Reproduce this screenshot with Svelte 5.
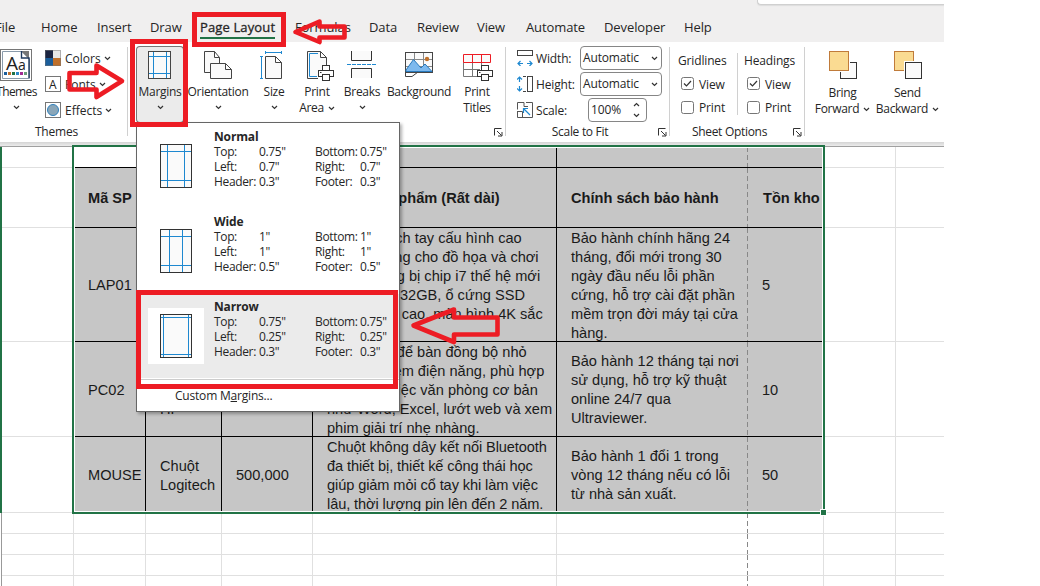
<script lang="ts">
  interface Tab {
    label: string;
    active?: boolean;
  }

  interface MarginPreset {
    name: string;
    rows: [string, string, string, string][];
    guides: string;
    selected?: boolean;
  }

  interface Cell {
    lines: string[];
    cls?: string;
  }

  const TABS: Tab[] = [
    { label: 'File' },
    { label: 'Home' },
    { label: 'Insert' },
    { label: 'Draw' },
    { label: 'Page Layout', active: true },
    { label: 'Formulas' },
    { label: 'Data' },
    { label: 'Review' },
    { label: 'View' },
    { label: 'Automate' },
    { label: 'Developer' },
    { label: 'Help' },
  ];

  const PRESETS: MarginPreset[] = [
    {
      name: 'Normal',
      rows: [
        ['Top:', '0.75"', 'Bottom:', '0.75"'],
        ['Left:', '0.7"', 'Right:', '0.7"'],
        ['Header:', '0.3"', 'Footer:', '0.3"'],
      ],
      guides: 'M7.5 1V43M24.5 1V43M1 7.5H31M1 36.5H31',
    },
    {
      name: 'Wide',
      rows: [
        ['Top:', '1"', 'Bottom:', '1"'],
        ['Left:', '1"', 'Right:', '1"'],
        ['Header:', '0.5"', 'Footer:', '0.5"'],
      ],
      guides: 'M9.5 1V43M22.5 1V43M1 7.5H31M1 36.5H31',
    },
    {
      name: 'Narrow',
      rows: [
        ['Top:', '0.75"', 'Bottom:', '0.75"'],
        ['Left:', '0.25"', 'Right:', '0.25"'],
        ['Header:', '0.3"', 'Footer:', '0.3"'],
      ],
      guides: 'M3.5 1V43M28.5 1V43M1 3.5H31M1 40.5H31',
      selected: true,
    },
  ];

  const OPTIONS = ['Gridlines', 'Headings'];

  const blank = (): Cell => ({ lines: [] });

  const ROWS: Cell[][] = [
    [blank(), blank(), blank(), blank(), blank(), blank()],
    [
      { lines: ['Mã SP'] },
      { lines: ['Tên'] },
      { lines: ['Giá'] },
      { lines: ['Mô tả sản phẩm (Rất dài)'] },
      { lines: ['Chính sách bảo hành'] },
      { lines: ['Tồn kho'], cls: 'wide-head' },
    ],
    [
      { lines: ['LAP01'] },
      { lines: ['Laptop', 'Dell'] },
      { lines: [] },
      {
        lines: [
          'Laptop, xách tay cấu hình cao',
          'chuyên dùng cho đồ họa và chơi',
          'game, trang bị chip i7 thế hệ mới',
          'nhất, RAM 32GB, ổ cứng SSD',
          '1TB tốc độ cao, màn hình 4K sắc',
          'nét.',
        ],
      },
      {
        lines: [
          'Bảo hành chính hãng 24',
          'tháng, đổi mới trong 30',
          'ngày đầu nếu lỗi phần',
          'cứng, hỗ trợ cài đặt phần',
          'mềm trọn đời máy tại cửa',
          'hàng.',
        ],
      },
      { lines: ['5'] },
    ],
    [
      { lines: ['PC02'] },
      { lines: ['Máy', 'tính', 'HP'] },
      { lines: [] },
      {
        lines: [
          'Phiên bản để bàn đồng bộ nhỏ',
          'gọn, tiết kiệm điện năng, phù hợp',
          'cho công việc văn phòng cơ bản',
          'như Word, Excel, lướt web và xem',
          'phim giải trí nhẹ nhàng.',
        ],
      },
      {
        lines: [
          'Bảo hành 12 tháng tại nơi',
          'sử dụng, hỗ trợ kỹ thuật',
          'online 24/7 qua',
          'Ultraviewer.',
        ],
      },
      { lines: ['10'] },
    ],
    [
      { lines: ['MOUSE'] },
      { lines: ['Chuột', 'Logitech'] },
      { lines: ['500,000'] },
      {
        lines: [
          'Chuột không dây kết nối Bluetooth',
          'đa thiết bị, thiết kế công thái học',
          'giúp giảm mỏi cổ tay khi làm việc',
          'lâu, thời lượng pin lên đến 2 năm.',
        ],
        cls: 'tight',
      },
      {
        lines: [
          'Bảo hành 1 đổi 1 trong',
          'vòng 12 tháng nếu có lỗi',
          'từ nhà sản xuất.',
        ],
      },
      { lines: ['50'] },
    ],
  ];

  const EMPTY_ROWS = [0, 1, 2, 3];
  const COLUMNS = [0, 1, 2, 3, 4, 5];
</script>

{#snippet chevron()}
  <svg class="chevron" width="7" height="5" viewBox="0 0 7 5">
    <path d="M1 1L3.5 3.5L6 1" fill="none" stroke="#333" stroke-width="1.2" />
  </svg>
{/snippet}

{#snippet launcher()}
  <svg class="launcher" width="9" height="9" viewBox="0 0 9 9">
    <path d="M.5 7.5V.5H7.5M3 3L7.5 7.5M8 4V8H4" fill="none" stroke="#333" />
  </svg>
{/snippet}

{#snippet printer(x: number, y: number)}
  <g transform="translate({x} {y})" fill="#fff" stroke="#333">
    <path d="M3 4.5H13V11H3Z" stroke="none" />
    <rect x="4.5" y=".5" width="7" height="5" />
    <rect x=".5" y="5.5" width="15" height="6" />
    <path d="M2 7.5H3.5" />
    <rect x="4.5" y="9.5" width="7" height="6" />
  </g>
{/snippet}

<div class="window">
  <header class="tab-bar">
    <div class="search-box"></div>
    <nav class="tabs">
      {#each TABS as tab (tab.label)}
        <span class="tab" class:active={tab.active}>{tab.label}</span>
      {/each}
    </nav>
  </header>

  <div class="ribbon">
    <section class="group themes">
      <div class="group-body">
        <div class="theme-btn">
          <svg width="32" height="32" viewBox="0 0 32 32">
            <rect x=".5" y=".5" width="31" height="31" fill="#fff" stroke="#767676" />
            <path d="M2.5 2.5H22L29.5 10V29.5H2.5Z" fill="#fff" stroke="#8a9bab" />
            <path d="M21 2H29V10Z" fill="#777" />
            <path d="M21.5 2V9H29V29" fill="none" stroke="#1f3a5f" stroke-width="1.4" />
            <text x="6" y="20.5" class="aa">A</text>
            <text x="18" y="20.5" class="aa small">a</text>
            <path d="M4 23h3v3h-3z" fill="#1b5e9b" />
            <path d="M8 23h3v3h-3z" fill="#c0702b" />
            <path d="M12 23h3v3h-3z" fill="#217346" />
            <path d="M16 23h3v3h-3z" fill="#2b88c8" />
            <path d="M20 23h3v3h-3z" fill="#a02b93" />
            <path d="M24 23h3v3h-3z" fill="#6a9c78" />
          </svg>
          <span class="themes-label">Themes</span>
          {@render chevron()}
        </div>
        <div class="theme-list">
          <div class="theme-row">
            <svg width="16" height="16" viewBox="0 0 16 16">
              <path d="M0 0H8V8H0Z" fill="#1b2440" />
              <path d="M8 0H16V8H8Z" fill="#e6e6e6" />
              <path d="M0 8H8V16H0Z" fill="#1b5e9b" />
              <path d="M8 8H16V16H8Z" fill="#c0702b" />
              <rect x=".5" y=".5" width="15" height="15" fill="none" stroke="#767676" stroke-opacity=".5" />
            </svg>
            <span>Colors</span>
            {@render chevron()}
          </div>
          <div class="theme-row">
            <svg width="16" height="16" viewBox="0 0 16 16">
              <rect x=".5" y=".5" width="15" height="15" fill="#fff" stroke="#767676" />
              <text x="4" y="12.5" class="font-a">A</text>
            </svg>
            <span>Fonts</span>
            {@render chevron()}
          </div>
          <div class="theme-row">
            <svg width="16" height="16" viewBox="0 0 16 16">
              <rect x=".5" y=".5" width="15" height="15" fill="#fff" stroke="#767676" />
              <circle cx="8" cy="8" r="5.5" fill="#8aa6b8" stroke="#2e80bd" />
            </svg>
            <span>Effects</span>
            {@render chevron()}
          </div>
        </div>
      </div>
      <div class="group-name">Themes</div>
    </section>

    <section class="group setup">
      <div class="group-body tools">
        <div class="tool pressed">
          <svg width="36" height="33" viewBox="142 49 36 33">
            <rect x="148.5" y="51.5" width="22" height="27" fill="#fafafa" stroke="#444" />
            <path d="M153.5 52V78M166.5 52V78M149 56.5H170M149 73.5H170" fill="none" stroke="#1e88d0" />
          </svg>
          <span>Margins</span>
          {@render chevron()}
        </div>
        <div class="tool">
          <svg width="36" height="33" viewBox="200 49 36 33">
            <path d="M211 72.5H204.5V51.5H214.5L219.5 57.5V64M214.5 51.5V57.5H219.5" fill="#fafafa" stroke="#444" />
            <path d="M210.5 63.5H225.5L231.5 69.5V78.5H210.5ZM225.5 63.5V69.5H231.5" fill="#fafafa" stroke="#444" />
          </svg>
          <span>Orientation</span>
          {@render chevron()}
        </div>
        <div class="tool">
          <svg width="36" height="33" viewBox="256 49 36 33">
            <path d="M265.5 52.5H281.5M265.5 51V54M281.5 51V54M261.5 56.5V78.5M260 56.5H263M260 78.5H263" fill="none" stroke="#1e88d0" />
            <path d="M265.5 56.5H275.5L281.5 62.5V78.5H265.5ZM275.5 56.5V62.5H281.5" fill="#fafafa" stroke="#444" />
          </svg>
          <span>Size</span>
          {@render chevron()}
        </div>
        <div class="tool">
          <svg width="36" height="33" viewBox="299 49 36 33">
            <path d="M318 78.5H307.5V51.5H320.5L326.5 57.5V66M320.5 51.5V57.5H326.5" fill="#fafafa" stroke="#444" />
            <path d="M317 76.5H309.5V53.5H318" fill="none" stroke="#1e88d0" />
            {@render printer(318, 65)}
          </svg>
          <span>Print</span>
          <span class="second">Area {@render chevron()}</span>
        </div>
        <div class="tool">
          <svg width="36" height="33" viewBox="344 49 36 33">
            <path d="M351.5 51V60.5H371.5V51M351.5 78V68.5H371.5V78" fill="#fafafa" stroke="#333" />
            <path d="M347 64.5H376" fill="none" stroke="#1e88d0" stroke-dasharray="4 1" />
          </svg>
          <span>Breaks</span>
          {@render chevron()}
        </div>
        <div class="tool">
          <svg width="36" height="33" viewBox="401 49 36 33">
            <rect x="405.5" y="52.5" width="27" height="19" fill="#fafafa" stroke="#444" />
            <path d="M414.5 53V71M423.5 53V71M406 59.5H432M406 66.5H432" fill="none" stroke="#888" />
            <circle cx="427" cy="59" r="2.2" fill="#c0702b" />
            <path d="M406 70L413.5 59.5L421 68L425 64L432 71.5H406Z" fill="#7db9ee" stroke="#2778bb" />
            <path d="M405.5 72V76.5H412L418 72" fill="#fff" stroke="#444" />
            <path d="M405 72.5H433" stroke="#444" />
          </svg>
          <span>Background</span>
        </div>
        <div class="tool">
          <svg width="36" height="33" viewBox="459 49 36 33">
            <path d="M463.5 62V76.5H478M472.5 62V76M481.5 62V68M464 69.5H480" fill="none" stroke="#777" />
            <path d="M463.5 54.5H490.5V62.5H463.5ZM472.5 54.5V62.5M481.5 54.5V62.5" fill="#fafafa" stroke="#ed1c24" />
            {@render printer(477, 65)}
          </svg>
          <span>Print</span>
          <span class="second">Titles</span>
        </div>
      </div>
      <div class="group-name">{@render launcher()}</div>
    </section>

    <section class="group scale">
      <div class="group-body scale-rows">
        <div class="scale-row">
          <svg width="17" height="16" viewBox="0 0 17 16">
            <rect x=".5" y=".5" width="15" height="5" fill="#fff" stroke="#444" />
            <path d="M1 13.5H6M10 13.5H15M3.5 11L1 13.5L3.5 16M12.5 11L15 13.5L12.5 16" fill="none" stroke="#1e88d0" stroke-width="1.2" />
          </svg>
          <span class="scale-label">Width:</span>
          <div class="select"><span>Automatic</span>{@render chevron()}</div>
        </div>
        <div class="scale-row">
          <svg width="17" height="16" viewBox="0 0 17 16">
            <rect x="10.5" y=".5" width="5" height="15" fill="#fff" stroke="#444" />
            <path d="M6 .5H9M6 15.5H9" stroke="#444" />
            <path d="M2.5 1V6M2.5 10V15M0 3.5L2.5 1L5 3.5M0 12.5L2.5 15L5 12.5" fill="none" stroke="#1e88d0" stroke-width="1.2" />
          </svg>
          <span class="scale-label">Height:</span>
          <div class="select"><span>Automatic</span>{@render chevron()}</div>
        </div>
        <div class="scale-row">
          <svg width="17" height="16" viewBox="0 0 17 16">
            <path d="M9 .5H15.5V15.5H.5V9M7 .5H.5V7.5M.5 9.5H5.5V15M7 .5V4.5H11" fill="none" stroke="#555" />
            <path d="M13 13L6.5 6.5M6.5 11V6.5H11" fill="none" stroke="#1e88d0" stroke-width="1.2" />
          </svg>
          <span class="scale-label">Scale:</span>
          <div class="select spinner">
            <span>100%</span>
            <span class="arrows">
              <span class="up">{@render chevron()}</span>
              {@render chevron()}
            </span>
          </div>
        </div>
      </div>
      <div class="group-name">Scale to Fit{@render launcher()}</div>
    </section>

    <section class="group sheet-options">
      <div class="group-body option-columns">
        {#each OPTIONS as option (option)}
          <div class="option-column">
            <span class="option-title">{option}</span>
            <span class="option">
              <svg width="13" height="13" viewBox="0 0 13 13">
                <rect x=".5" y=".5" width="12" height="12" rx="2" fill="#fff" stroke="#767676" />
                <path d="M3 6.5L5.5 9L10 4" fill="none" stroke="#333" stroke-width="1.2" />
              </svg>
              <span>View</span>
            </span>
            <span class="option">
              <svg width="13" height="13" viewBox="0 0 13 13">
                <rect x=".5" y=".5" width="12" height="12" rx="2" fill="#fff" stroke="#767676" />
              </svg>
              <span>Print</span>
            </span>
          </div>
        {/each}
      </div>
      <div class="group-name">Sheet Options{@render launcher()}</div>
    </section>

    <section class="group arrange">
      <div class="group-body tools">
        <div class="tool">
          <svg width="36" height="33" viewBox="824 49 36 33">
            <rect x="839.5" y="62.5" width="16" height="16" fill="#fafafa" stroke="#333" />
            <rect x="827" y="50" width="22" height="22" fill="#fff" />
            <rect x="828.5" y="51.5" width="19" height="19" fill="#fadb92" stroke="#c07b3a" />
          </svg>
          <span>Bring</span>
          <span class="second">Forward {@render chevron()}</span>
        </div>
        <div class="tool">
          <svg width="36" height="33" viewBox="889 49 36 33">
            <rect x="893.5" y="51.5" width="19" height="19" fill="#fadb92" stroke="#c07b3a" />
            <rect x="903" y="61" width="19" height="19" fill="#fff" />
            <rect x="904.5" y="62.5" width="16" height="16" fill="#fafafa" stroke="#333" />
          </svg>
          <span>Send</span>
          <span class="second">Backward {@render chevron()}</span>
        </div>
      </div>
    </section>
  </div>

  <main class="sheet">
    <div class="grid">
      {#each ROWS as row, r}
        <div class="edge selected"></div>
        <div class="cell"></div>
        {#each row as cell, c}
          <div
            class="cell filled {cell.cls ?? ''}"
            class:active-cell={r === 0 && c === 0}
            class:header={r === 1}
            class:break={c === 4}
          >
            {#each cell.lines as line}
              <span>{line}</span>
            {/each}
          </div>
        {/each}
        <div class="cell"></div>
        <div class="cell tail"></div>
      {/each}
      {#each EMPTY_ROWS as row (row)}
        <div class="edge"></div>
        <div class="cell"></div>
        {#each COLUMNS as c (c)}
          <div class="cell" class:break={c === 4}></div>
        {/each}
        <div class="cell"></div>
        <div class="cell tail"></div>
      {/each}
    </div>
    <div class="selection"></div>
    <div class="fill-handle"></div>
  </main>

  <div class="menu">
    {#each PRESETS as preset (preset.name)}
      <div class="preset" class:selected={preset.selected}>
        <div class="thumb">
          <svg width="32" height="44" viewBox="0 0 32 44">
            <rect x=".5" y=".5" width="31" height="43" fill="#fafafa" stroke="#333" />
            <path d={preset.guides} fill="none" stroke="#1e88d0" />
          </svg>
        </div>
        <div class="preset-text">
          <strong>{preset.name}</strong>
          {#each preset.rows as row}
            <div class="preset-row">
              {#each row as value}
                <span>{value}</span>
              {/each}
            </div>
          {/each}
        </div>
      </div>
    {/each}
    <div class="custom">Custom M<u>a</u>rgins...</div>
  </div>

  <div class="mark mark-tab"></div>
  <div class="mark mark-button"></div>
  <div class="mark mark-preset"></div>
  <svg class="arrows-layer" width="944" height="586" viewBox="0 0 944 586">
    <path d="M344.5 26.5H319.5V21.5L295.5 32L319.5 42V37.5H344.5Z" />
    <path d="M69.5 73H96.5V65.5L122 81L96.5 97V89.5H69.5Z" />
    <path d="M497.5 317.5H454V309.5L413.5 325.5L454 342V334.5H497.5Z" />
  </svg>
</div>

<style>
  :global(body) {
    margin: 0;
    background: #fff;
  }

  .window {
    position: relative;
    width: 944px;
    height: 586px;
    overflow: hidden;
    font-family: 'Open Sans', 'Noto Sans', sans-serif;
    font-size: 12px;
    line-height: 16px;
    letter-spacing: -0.15px;
    color: #262626;
    white-space: nowrap;
  }

  .window svg {
    display: block;
    flex: none;
  }

  .tab-bar {
    height: 42px;
    background: #f0efef;
  }

  .search-box {
    box-sizing: border-box;
    height: 5px;
    margin-left: 757px;
    background: #fff;
    border: solid #d0d0d0;
    border-width: 0 0 1px 1px;
    border-bottom-left-radius: 4px;
    box-shadow: 0 1px 1px #ddd;
  }

  .tabs {
    display: grid;
    grid-template-columns: 46px 56px 53px 50px 95px 74px 48px 60px 49px 78px 80px 60px;
    margin-left: -5px;
    padding-top: 13px;
    font-size: 13px;
    line-height: 18px;
    letter-spacing: -0.1px;
  }

  .tab {
    justify-self: start;
  }

  .tab.active {
    padding-bottom: 1px;
    border-bottom: 2px solid #217346;
    letter-spacing: 0.13px;
    -webkit-text-stroke: 0.3px #262626;
  }

  .ribbon {
    display: flex;
    box-sizing: border-box;
    height: 100px;
    background: #fff;
  }

  .group {
    position: relative;
    display: flex;
    flex-direction: column;
    box-sizing: border-box;
    height: 94px;
    flex: none;
    background: linear-gradient(#d0d0d0, #d0d0d0) right 5px / 1px 89px no-repeat;
  }

  .group-body {
    display: flex;
    flex: none;
    box-sizing: border-box;
    height: 82px;
  }

  .group-name {
    flex: none;
    height: 16px;
    text-align: center;
    letter-spacing: 0;
  }

  .launcher {
    position: absolute;
    right: 3px;
    bottom: -1px;
  }

  .themes {
    width: 128px;
  }

  .themes .group-name {
    padding-right: 15px;
    letter-spacing: -0.2px;
  }

  .theme-btn {
    display: flex;
    flex-direction: column;
    align-items: center;
    width: 32px;
    padding-top: 7px;
  }

  .themes-label {
    margin: 3px 0 5px 1px;
    letter-spacing: -0.6px;
  }

  .aa {
    font-size: 19px;
    fill: #222;
  }

  .aa.small {
    font-size: 14px;
  }

  .font-a {
    font-size: 12px;
    fill: #222;
  }

  .theme-list {
    display: flex;
    flex-direction: column;
    gap: 10px;
    padding: 8px 0 0 13px;
    letter-spacing: 0;
  }

  .theme-row {
    display: flex;
    align-items: center;
    gap: 4px;
    height: 16px;
  }

  .theme-row span {
    padding-top: 1px;
  }

  .theme-row .chevron {
    margin-left: -1px;
  }

  .setup {
    width: 378px;
  }

  .tools {
    display: grid;
    padding: 4px 0 0 8px;
    grid-template-columns: 48px 68px 44px 42px 48px 66px 50px;
    letter-spacing: -0.3px;
  }

  .tool {
    display: flex;
    flex-direction: column;
    align-items: center;
    box-sizing: border-box;
    width: 100%;
    height: 77px;
    padding-top: 3px;
  }

  .tool > span {
    margin-top: 2px;
  }

  .tool > .chevron {
    margin-top: 5px;
  }

  .tool > .second {
    display: flex;
    align-items: center;
    gap: 4px;
    margin-top: 0;
  }

  .pressed {
    background: #ebebeb;
    border-radius: 4px;
    box-shadow: inset 0 0 0 1px #767676;
  }

  .scale {
    width: 164px;
  }

  .scale .group-name {
    padding-right: 16px;
    letter-spacing: -0.3px;
  }

  .scale-rows {
    flex-direction: column;
    gap: 2px;
    padding: 4px 0 0 11px;
  }

  .scale-row {
    display: flex;
    align-items: center;
    height: 24px;
  }

  .scale-label {
    width: 44px;
    margin-left: 2px;
    padding-top: 1px;
  }

  .select {
    display: flex;
    align-items: center;
    justify-content: space-between;
    box-sizing: border-box;
    width: 82px;
    height: 24px;
    padding: 0 3px 0 2px;
    border: 1px solid #868686;
    border-radius: 4px;
    background: #fff;
  }

  .spinner {
    width: 59px;
    margin-left: 8px;
    padding-right: 6px;
  }

  .arrows {
    display: flex;
    flex-direction: column;
    gap: 6px;
  }

  .up {
    transform: rotate(180deg);
  }

  .sheet-options {
    width: 135px;
  }

  .sheet-options .group-name {
    padding-right: 16px;
    letter-spacing: -0.3px;
  }

  .option-column {
    display: flex;
    flex-direction: column;
    box-sizing: border-box;
    width: 68px;
    margin-top: 11px;
    height: 62px;
    padding-left: 8px;
    border-right: 1px solid #d0d0d0;
  }

  .option-column + .option-column {
    width: 67px;
    padding-left: 6px;
    border: 0;
  }

  .option {
    display: flex;
    align-items: center;
    gap: 5px;
    height: 24px;
    padding-left: 3px;
  }

  .option span {
    padding-top: 2px;
  }

  .option-title {
    height: 12px;
  }

  .option-title + .option {
    margin-top: 7px;
  }

  .option + .option {
    height: 16px;
    padding-top: 4px;
  }

  .arrange {
    width: 139px;
    background: none;
  }

  .arrange .tools {
    grid-template-columns: 59px 71px;
  }

  .arrange .tool > span:not(.second) {
    margin-top: 3px;
  }

  .sheet {
    position: relative;
    height: 444px;
    box-sizing: border-box;
    padding-top: 5px;
    background: linear-gradient(#d4d4d4, #ececec 4px, #a0a0a0 4px, #a0a0a0 5px, #fff 5px) no-repeat;
    overflow: hidden;
  }

  .grid {
    display: grid;
    grid-template-columns: 2px 72px 72px 76px 91px 244px 191px 76px 72px 48px;
    grid-template-rows: 21px 60px 114px 95px 76px 21px 21px 21px 21px;
    font-family: 'Liberation Sans', Arial, sans-serif;
    font-size: 14.6px;
    line-height: 19px;
    letter-spacing: 0;
    color: #1a1a1a;
  }

  .edge {
    border-right: 1px solid #999;
  }

  .edge.selected {
    border-right: 2px solid #217346;
  }

  .cell {
    box-sizing: border-box;
    border: solid #e0e0e0;
    border-width: 0 1px 1px 0;
  }

  .cell.tail {
    border-right: 0;
  }

  .filled {
    display: flex;
    flex-direction: column;
    justify-content: center;
    padding: 2px 0 0 14px;
    background-color: #c6c6c6;
    border-color: #000;
  }

  .active-cell {
    background-color: #fff;
  }

  .header {
    font-weight: 700;
  }

  .wide-head {
    padding-left: 15px;
  }

  .tight {
    letter-spacing: -0.1px;
  }

  .break {
    border-right: 0;
    background-image: repeating-linear-gradient(#888 0 5px, transparent 5px 8px);
    background-position: right top;
    background-size: 1px 100%;
    background-repeat: no-repeat;
  }

  .selection {
    position: absolute;
    left: 72px;
    top: 3px;
    width: 749px;
    height: 365px;
    border: 2px solid #217346;
    box-shadow: inset 0 0 0 1px #fff;
  }

  .fill-handle {
    position: absolute;
    left: 821px;
    top: 368px;
    width: 5px;
    height: 5px;
    background: #217346;
    outline: 1px solid #fff;
  }

  .menu {
    position: absolute;
    left: 136px;
    top: 122px;
    width: 262px;
    height: 288px;
    background: #fff;
    border: 1px solid #666;
    box-shadow: 2px 2px 3px rgba(0, 0, 0, 0.3);
    letter-spacing: -0.35px;
  }

  .preset {
    display: flex;
    height: 85px;
    box-sizing: border-box;
    padding-left: 11px;
  }

  .preset.selected {
    height: 84px;
    margin-top: 1px;
    background: #ebebeb;
  }

  .thumb {
    display: flex;
    justify-content: center;
    align-items: center;
    width: 56px;
    height: 56px;
    margin-top: 15px;
  }

  .selected .thumb {
    background: #fff;
    margin-top: 14px;
  }

  .preset-text {
    margin: 6px 0 0 10px;
    line-height: 15px;
  }

  .selected .preset-text {
    margin-top: 5px;
  }

  strong {
    display: block;
    letter-spacing: -0.15px;
  }

  .preset-row {
    display: grid;
    grid-template-columns: 45px 56px 45px 30px;
  }

  .custom {
    margin-top: 1px;
    padding: 8px 0 0 38px;
    border-top: 1px solid #ccc;
    letter-spacing: -0.2px;
  }

  .mark {
    position: absolute;
    box-sizing: border-box;
    border: 5px solid #ed1c24;
  }

  .mark-tab {
    left: 192px;
    top: 12px;
    width: 94px;
    height: 35px;
  }

  .mark-button {
    left: 130px;
    top: 39px;
    width: 58px;
    height: 88px;
  }

  .mark-preset {
    left: 136px;
    top: 290px;
    width: 262px;
    height: 99px;
  }

  .arrows-layer {
    position: absolute;
    left: 0;
    top: 0;
    fill: none;
    stroke: #ed1c24;
    stroke-width: 4.6px;
    stroke-linejoin: round;
  }
</style>
